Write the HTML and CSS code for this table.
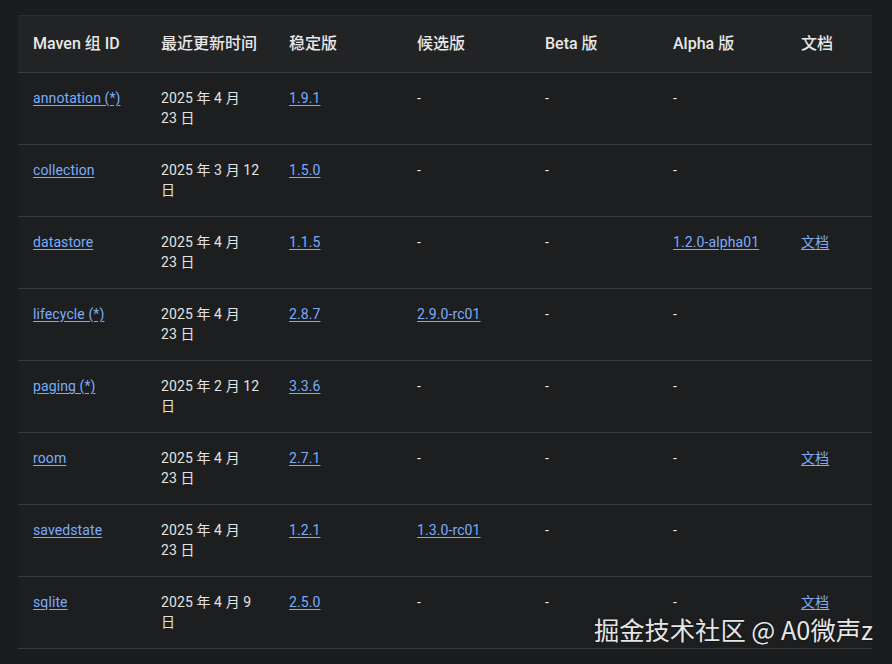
FILE: index.html
```html
<!DOCTYPE html>
<html lang="zh-CN">
<head>
<meta charset="utf-8">
<title>AndroidX 库</title>
<link rel="stylesheet" href="styles.css">
</head>
<body>
<div class="page">
  <table class="libs">
    <colgroup>
      <col class="c-std"><col class="c-std"><col class="c-std"><col class="c-std"><col class="c-std"><col class="c-std"><col class="c-last">
    </colgroup>
    <thead>
      <tr>
        <th>Maven 组 ID</th>
        <th>最近更新时间</th>
        <th>稳定版</th>
        <th>候选版</th>
        <th>Beta 版</th>
        <th>Alpha 版</th>
        <th>文档</th>
      </tr>
    </thead>
    <tbody>
      <tr>
        <td><a href="#">annotation (*)</a></td>
        <td>2025 年 4 月<br>23 日</td>
        <td><a href="#">1.9.1</a></td>
        <td>-</td>
        <td>-</td>
        <td>-</td>
        <td></td>
      </tr>
      <tr>
        <td><a href="#">collection</a></td>
        <td>2025 年 3 月 12<br>日</td>
        <td><a href="#">1.5.0</a></td>
        <td>-</td>
        <td>-</td>
        <td>-</td>
        <td></td>
      </tr>
      <tr>
        <td><a href="#">datastore</a></td>
        <td>2025 年 4 月<br>23 日</td>
        <td><a href="#">1.1.5</a></td>
        <td>-</td>
        <td>-</td>
        <td><a href="#">1.2.0-alpha01</a></td>
        <td><a href="#">文档</a></td>
      </tr>
      <tr>
        <td><a href="#">lifecycle (*)</a></td>
        <td>2025 年 4 月<br>23 日</td>
        <td><a href="#">2.8.7</a></td>
        <td><a href="#">2.9.0-rc01</a></td>
        <td>-</td>
        <td>-</td>
        <td></td>
      </tr>
      <tr>
        <td><a href="#">paging (*)</a></td>
        <td>2025 年 2 月 12<br>日</td>
        <td><a href="#">3.3.6</a></td>
        <td>-</td>
        <td>-</td>
        <td>-</td>
        <td></td>
      </tr>
      <tr>
        <td><a href="#">room</a></td>
        <td>2025 年 4 月<br>23 日</td>
        <td><a href="#">2.7.1</a></td>
        <td>-</td>
        <td>-</td>
        <td>-</td>
        <td><a href="#">文档</a></td>
      </tr>
      <tr>
        <td><a href="#">savedstate</a></td>
        <td>2025 年 4 月<br>23 日</td>
        <td><a href="#">1.2.1</a></td>
        <td><a href="#">1.3.0-rc01</a></td>
        <td>-</td>
        <td>-</td>
        <td></td>
      </tr>
      <tr>
        <td><a href="#">sqlite</a></td>
        <td>2025 年 4 月 9<br>日</td>
        <td><a href="#">2.5.0</a></td>
        <td>-</td>
        <td>-</td>
        <td>-</td>
        <td><a href="#">文档</a></td>
      </tr>
    </tbody>
  </table>
  <div class="watermark">掘金技术社区 @ A0微声z</div>
</div>
</body>
</html>
```

FILE: styles.css
```css
html, body {
  margin: 0;
  padding: 0;
  background: #1b1c1d;
}

body {
  font-family: Roboto, "Noto Sans CJK SC", sans-serif;
  color: #e3e3e3;
  height: 664px;
  overflow: hidden;
}

.page {
  position: relative;
  height: 664px;
  padding: 15px 20px 0 18px;
  box-sizing: border-box;
}

.libs {
  width: 854px;
  table-layout: fixed;
  border-collapse: collapse;
  background: #1d1e1f;
}

.c-std { width: 128px; }
.c-last { width: 86px; }

.libs th {
  background: #222324;
  text-align: left;
  font-size: 16px;
  font-weight: 500;
  line-height: 24px;
  padding: 16px 15px 16px 15px;
  border-top: 1px solid #2c2d2e;
  border-bottom: 1px solid #3c3d3e;
  white-space: nowrap;
  color: #e8e8e8;
}

.libs td {
  font-size: 14px;
  letter-spacing: 0.1px;
  line-height: 20px;
  padding: 15px 15px 16px 15px;
  height: 40px;
  vertical-align: top;
  border-bottom: 1px solid #3a3b3c;
  white-space: nowrap;
}

.libs a {
  color: #7cacf8;
  text-decoration: underline;
  text-underline-offset: 2px;
}

.watermark {
  position: absolute;
  right: 19px;
  top: 612px;
  font-family: "Noto Sans CJK SC", sans-serif;
  font-size: 25.3px;
  line-height: 34px;
  color: #e6e6e6;
  text-shadow: 0 0 2px rgba(0, 0, 0, 0.7);
}
```
